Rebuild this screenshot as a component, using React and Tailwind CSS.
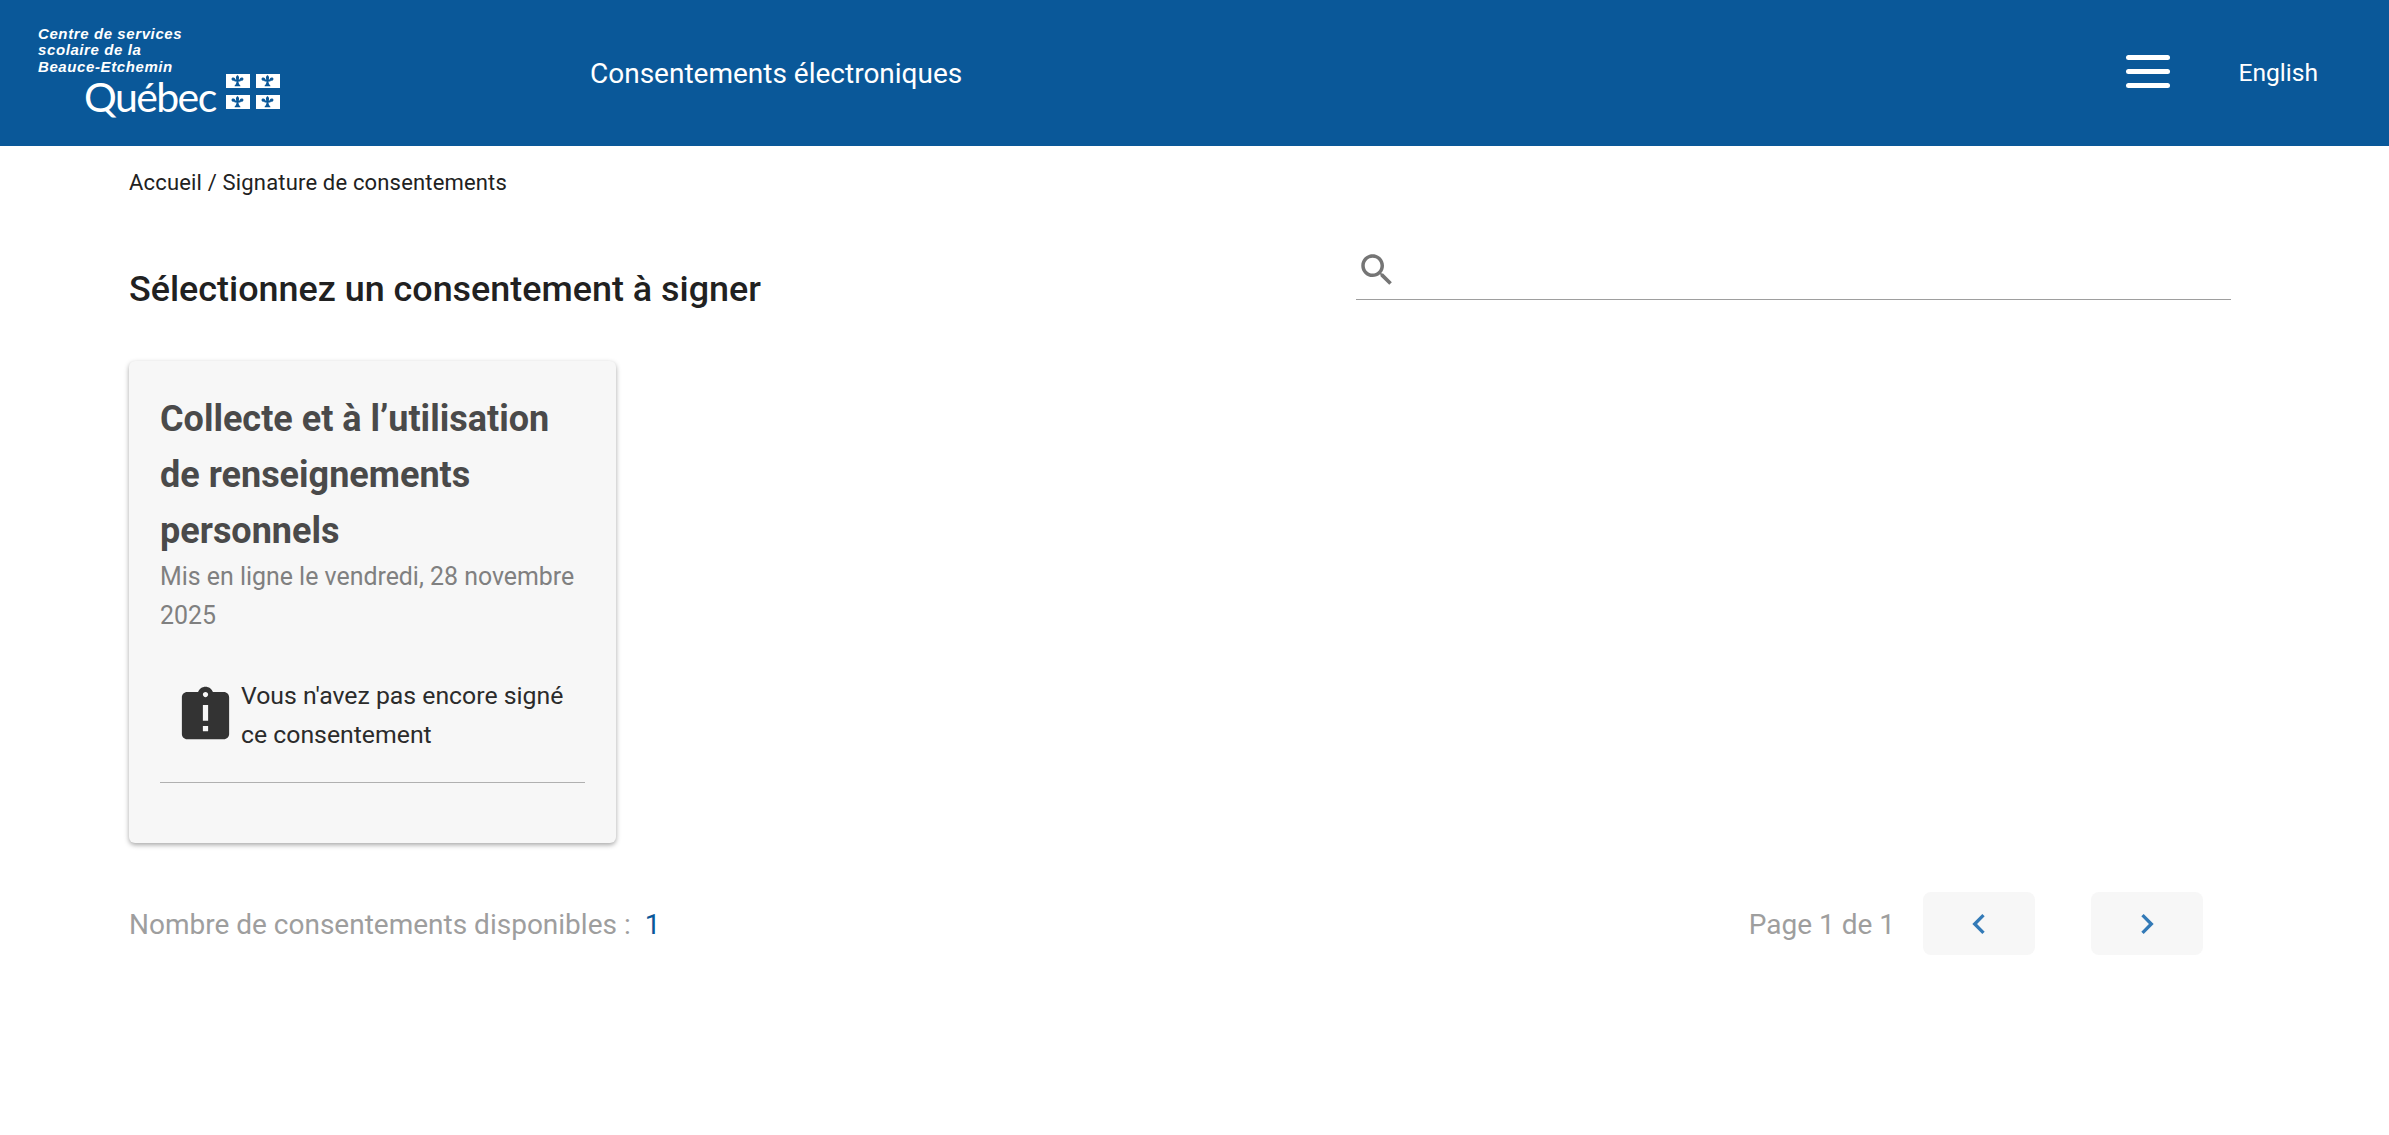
const SearchIcon = () => (
  <svg viewBox="0 0 24 24" className="w-[42px] h-[42px] mt-[2px] fill-[#757575]">
    <path d="M15.5 14h-.79l-.28-.27C15.41 12.59 16 11.11 16 9.5 16 5.91 13.09 3 9.5 3S3 5.91 3 9.5 5.91 16 9.5 16c1.61 0 3.09-.59 4.23-1.57l.27.28v.79l5 4.99L20.49 19l-4.99-5zm-6 0C7.01 14 5 11.99 5 9.5S7.01 5 9.5 5 14 7.01 14 9.5 11.99 14 9.5 14z" />
  </svg>
);

const LateIcon = () => (
  <svg viewBox="0 0 24 24" className="w-[63px] h-[63px] shrink-0 fill-[#333333]">
    <path d="M19 3h-4.18C14.4 1.84 13.3 1 12 1c-1.3 0-2.4.84-2.82 2H5c-1.1 0-2 .9-2 2v14c0 1.1.9 2 2 2h14c1.1 0 2-.9 2-2V5c0-1.1-.9-2-2-2zm-6 15h-2v-2h2v2zm0-4h-2V8h2v6zm-1-9c-.55 0-1-.45-1-1s.45-1 1-1 1 .45 1 1-.45 1-1 1z" />
  </svg>
);

const Chevron = ({ right }) => (
  <svg viewBox="0 0 24 24" className={right ? 'w-[40px] h-[40px] fill-[#337ab7] rotate-180' : 'w-[40px] h-[40px] fill-[#337ab7]'}>
    <path d="M15.41 7.41L14 6l-6 6 6 6 1.41-1.41L10.83 12z" />
  </svg>
);

const Flag = () => (
  <div className="w-[24px] h-[14px] bg-white flex items-center justify-center">
    <svg viewBox="0 0 16 10" className="w-[19px] h-[12px] fill-[#0a5899]">
      <path d="M8 0c1.3 1.2 1.7 2.3 1 3.7h0.8c0.2-1.4 1.2-2 2.4-1.6 1.2 0.5 1.1 2.1-0.2 2.6 -0.4 0.2-0.9 0.1-1.2-0.1 0 0.5-0.5 0.8-1.2 0.8h-0.8c0.1 1.5 0.6 2.5 1.6 3.3v0.8H5.6v-0.8c1-0.8 1.5-1.8 1.6-3.3h-0.8c-0.7 0-1.2-0.3-1.2-0.8 -0.3 0.2-0.8 0.3-1.2 0.1 -1.3-0.5-1.4-2.1-0.2-2.6 1.2-0.4 2.2 0.2 2.4 1.6h0.8C6.3 2.3 6.7 1.2 8 0z" />
    </svg>
  </div>
);

const Logo = () => (
  <div className="w-[190px] ml-[38px] -mt-[8px]">
    <div className="font-['Liberation_Sans',sans-serif] font-bold italic text-white text-[15px] leading-[16.5px] tracking-[0.6px] whitespace-nowrap">
      <div>Centre de services</div>
      <div>scolaire de la</div>
      <div>Beauce-Etchemin</div>
    </div>
    <div className="flex items-center mt-[7px] ml-[46px] h-[30px] w-[200px]">
      <span className="font-['Lato',sans-serif] font-normal text-white text-[41px] leading-[30px] tracking-[-1.6px] whitespace-nowrap">Québec</span>
      <div className="grid grid-cols-2 gap-x-[6px] gap-y-[7px] ml-[10px] -mt-[12px]">
        <Flag />
        <Flag />
        <Flag />
        <Flag />
      </div>
    </div>
  </div>
);

export default function App() {
  return (
    <div className="min-h-[1135px] bg-white font-['Roboto',sans-serif]">
      <header className="h-[146px] bg-[#0a5899] flex items-center text-white">
        <div className="w-[590px]">
          <Logo />
        </div>
        <div className="flex-1 text-[28px] leading-[36px] mt-[1px]">Consentements électroniques</div>
        <div className="flex flex-col gap-[9px] w-[44px] ml-[4px] -mt-[3px]">
          <span className="h-[5px] rounded-full bg-white" />
          <span className="h-[5px] rounded-full bg-white" />
          <span className="h-[5px] rounded-full bg-white" />
        </div>
        <div className="ml-[68px] mr-[71px] text-[24.6px] leading-[36px]">English</div>
      </header>

      <main className="pl-[129px] pr-[158px]">
        <div className="pt-[23px] text-[22px] leading-[28px] tracking-[0.17px] text-[#212121]">Accueil / Signature de consentements</div>

        <div className="flex items-start justify-between mt-[42px]">
          <h1 className="mt-[30px] text-[35.9px] leading-[40px] font-medium text-[#212121]">Sélectionnez un consentement à signer</h1>
          <div className="w-[875px] h-[61px] border-b border-[#9e9e9e] flex items-center">
            <SearchIcon />
          </div>
        </div>

        <div className="mt-[52px] w-[487px] h-[482px] rounded-[6px] bg-[#f7f7f7] shadow-[0_2px_5px_rgba(0,0,0,0.35)] px-[31px] pt-[30px]">
          <h2 className="text-[36px] leading-[56px] font-bold text-[#4a4a4a]">Collecte et à l’utilisation de renseignements personnels</h2>
          <p className="-mt-[2px] text-[24.9px] leading-[39px] text-[#808080]">Mis en ligne le vendredi, 28 novembre 2025</p>
          <div className="flex items-center gap-[4px] mt-[41px] pl-[14px]">
            <LateIcon />
            <p className="text-[24.8px] leading-[39px] text-[#2b2b2b]">Vous n'avez pas encore signé ce consentement</p>
          </div>
          <div className="mt-[28px] border-t border-[#b0b0b0]" />
        </div>

        <div className="flex items-center justify-between mt-[49px] h-[63px] pr-[28px]">
          <div className="text-[28px] leading-[36px] text-[#9e9e9e] mt-[3px]">
            Nombre de consentements disponibles : <span className="ml-[7px] text-[#0a5899]">1</span>
          </div>
          <div className="flex items-center">
            <span className="text-[28px] leading-[36px] text-[#9e9e9e] mr-[28px] mt-[3px]">Page 1 de 1</span>
            <button className="w-[112px] h-[63px] rounded-[8px] bg-[#f7f7f7] flex items-center justify-center"><Chevron /></button>
            <button className="ml-[56px] w-[112px] h-[63px] rounded-[8px] bg-[#f7f7f7] flex items-center justify-center"><Chevron right /></button>
          </div>
        </div>
      </main>
    </div>
  );
}
